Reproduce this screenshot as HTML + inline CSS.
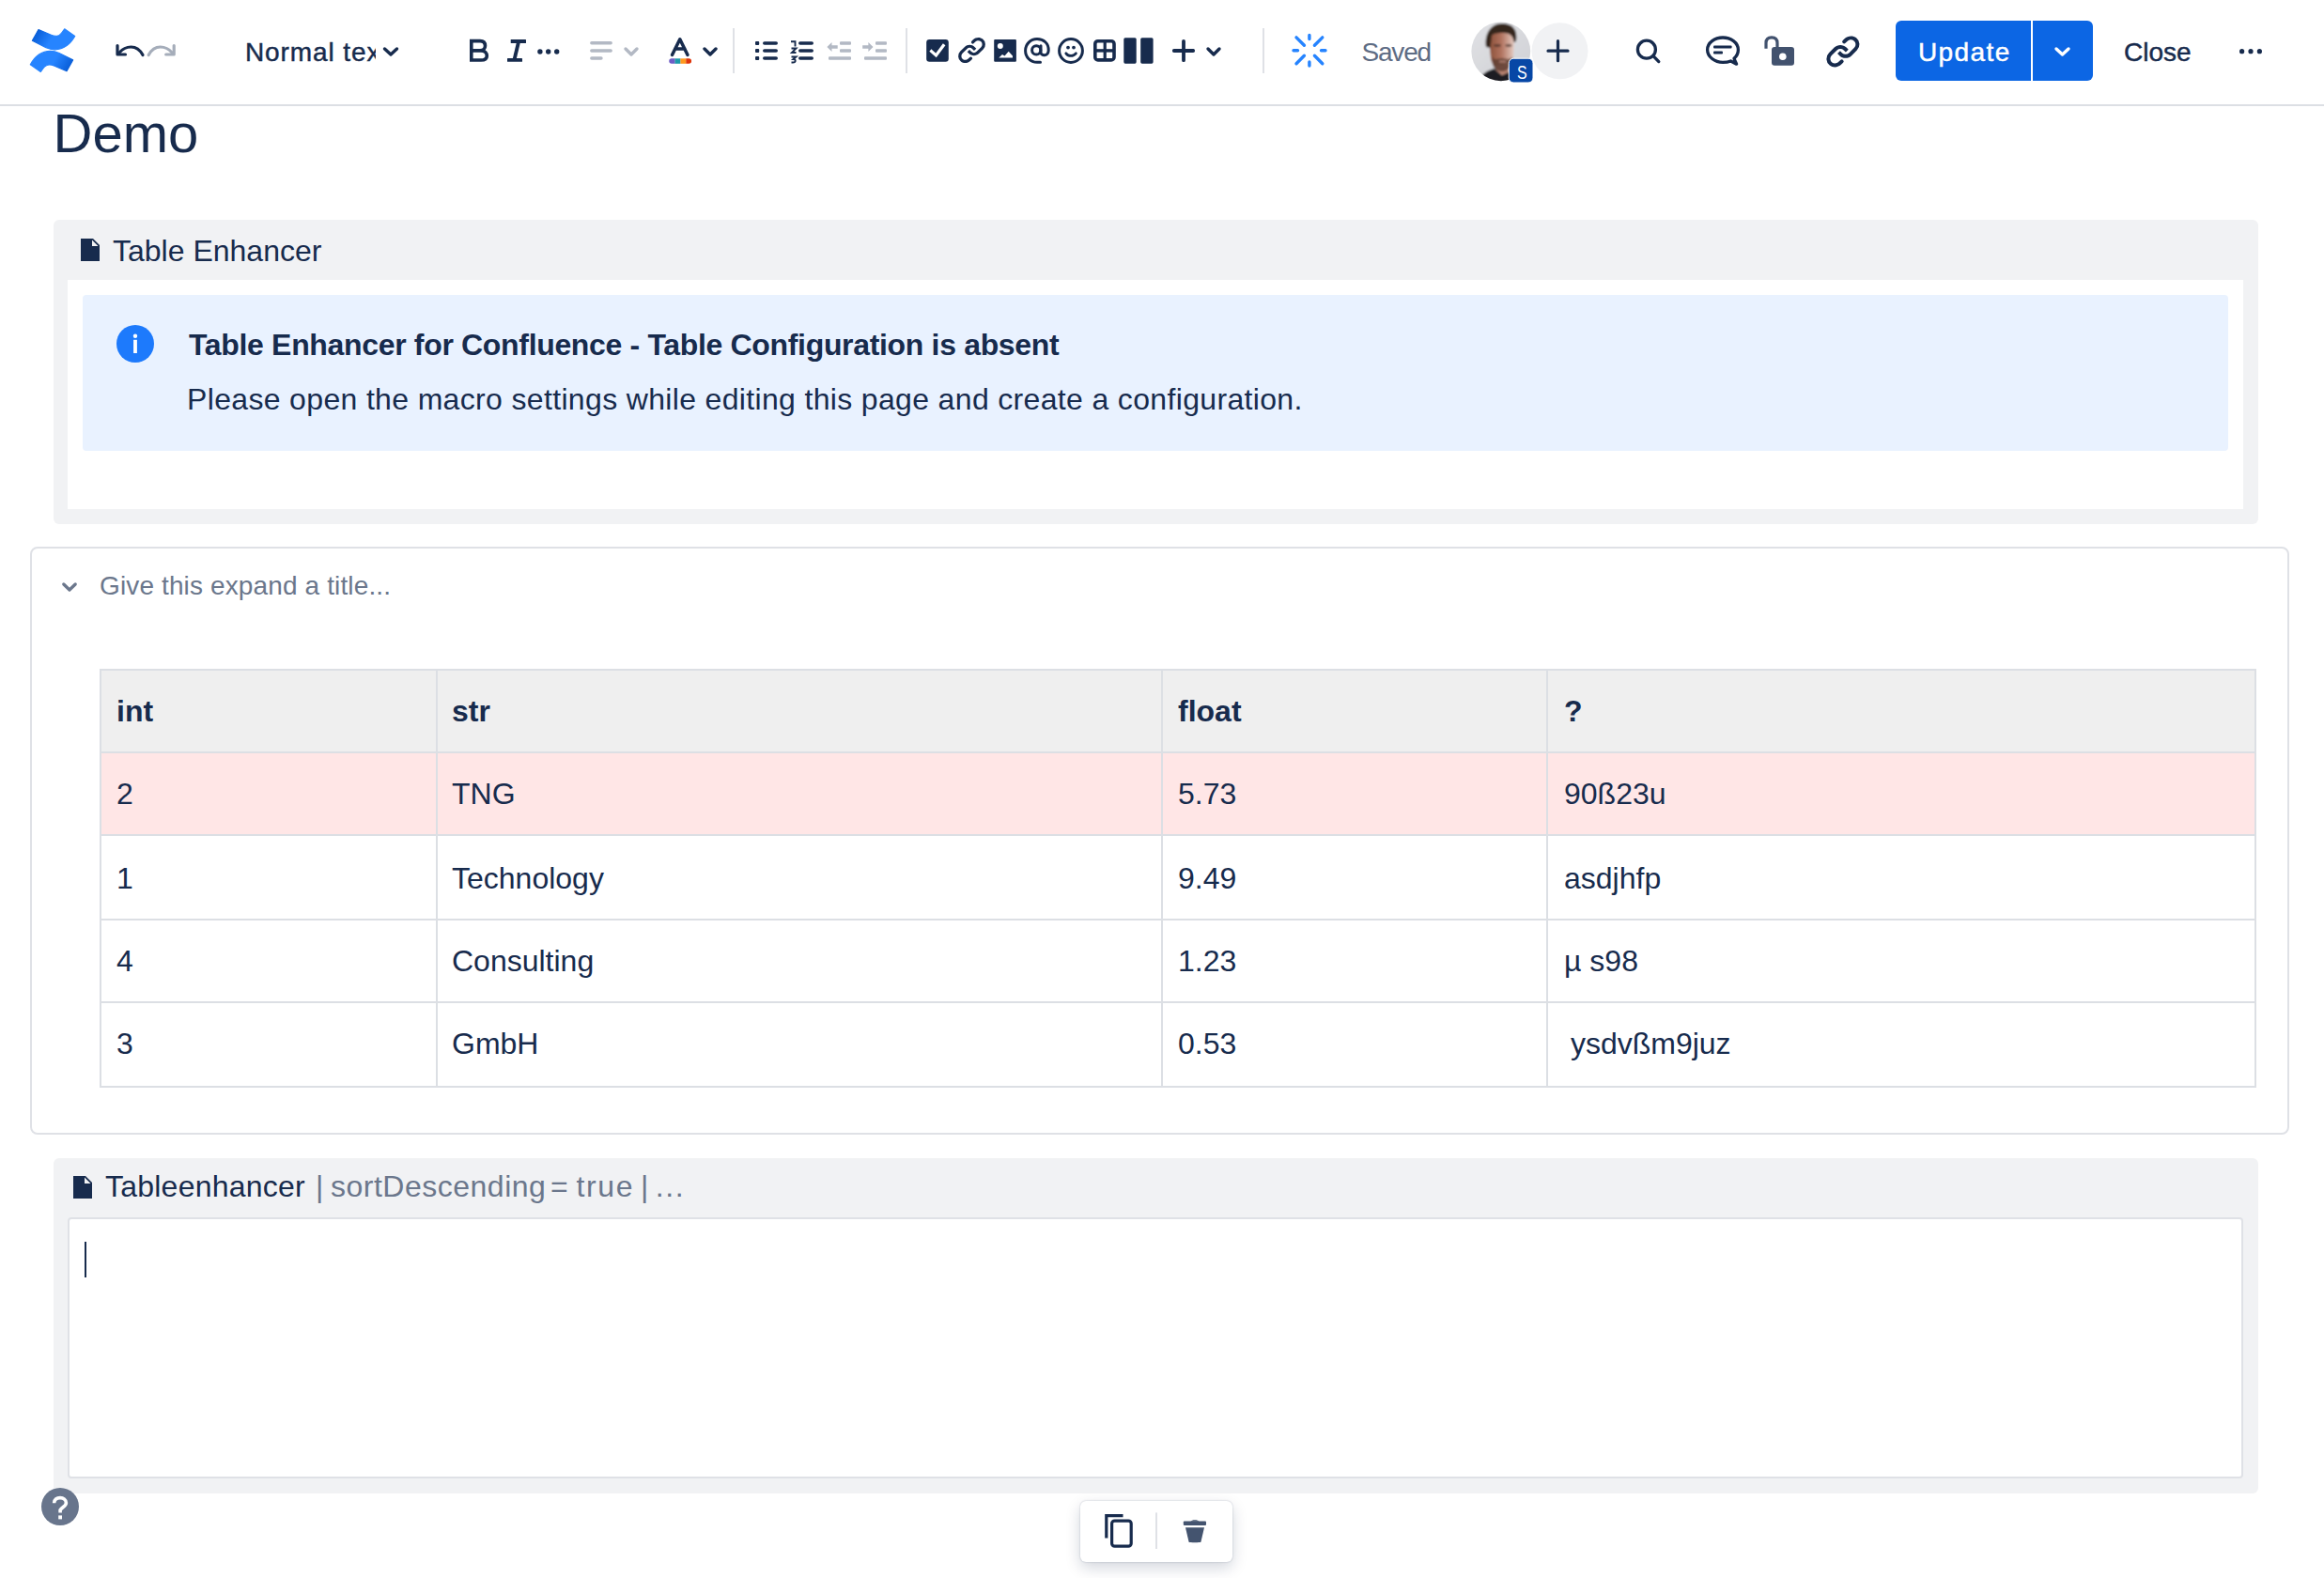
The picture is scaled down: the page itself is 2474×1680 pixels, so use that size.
<!DOCTYPE html>
<html><head><meta charset="utf-8">
<style>
html,body{margin:0;padding:0;background:#fff;}
body{width:2474px;height:1680px;position:relative;overflow:hidden;font-family:"Liberation Sans",sans-serif;color:#172B4D;}
.a{position:absolute;white-space:nowrap;line-height:1;}
.t28{font-size:28px;}
.t32{font-size:32px;}
.b{font-weight:bold;}
#hdr{position:absolute;left:0;top:0;width:2474px;height:111px;background:#fff;border-bottom:2px solid #DCDFE4;}
svg.ov{position:absolute;left:0;top:0;overflow:visible;}
.btn{position:absolute;background:#0C66E4;}
.panel{position:absolute;background:#F1F2F4;border-radius:6px;}
.cell{position:absolute;}
.hl{position:absolute;background:#DCDFE4;}
</style></head>
<body>
<div id="hdr"></div>

<!-- toolbar texts -->
<div class="a t28" style="left:261px;top:42px;width:139px;overflow:hidden;letter-spacing:0.9px;-webkit-text-stroke:0.45px #172B4D;">Normal text</div>
<div class="a t28" style="left:1449.5px;top:42px;color:#5E6C84;letter-spacing:-1.2px;">Saved</div>
<div class="btn" style="left:2018px;top:22px;width:144px;height:64px;border-radius:6px 0 0 6px;"></div>
<div class="btn" style="left:2164px;top:22px;width:64px;height:64px;border-radius:0 6px 6px 0;"></div>
<div class="a t28" style="left:2042px;top:42px;color:#fff;letter-spacing:1.4px;-webkit-text-stroke:0.45px #fff;">Update</div>
<div class="a t28" style="left:2261px;top:42px;-webkit-text-stroke:0.45px #172B4D;">Close</div>

<!-- title -->
<div class="a" style="left:56.5px;top:112.6px;font-size:58px;">Demo</div>

<!-- Table Enhancer panel -->
<div class="panel" style="left:57px;top:234px;width:2347px;height:324px;"></div>
<div class="a t32" style="left:120px;top:251px;">Table Enhancer</div>
<div style="position:absolute;left:72px;top:298px;width:2316px;height:244px;background:#fff;"></div>
<div style="position:absolute;left:88px;top:314px;width:2284px;height:166px;background:#E9F2FF;border-radius:4px;"></div>
<div class="a t32 b" style="left:201px;top:351px;letter-spacing:-0.33px;">Table Enhancer for Confluence - Table Configuration is absent</div>
<div class="a t32" style="left:199px;top:408.5px;letter-spacing:0.34px;">Please open the macro settings while editing this page and create a configuration.</div>

<!-- expand -->
<div style="position:absolute;left:32px;top:582px;width:2401px;height:622px;border:2px solid #DFE1E6;border-radius:8px;box-sizing:content-box;"></div>
<div class="a t28" style="left:106px;top:610px;color:#6B778C;letter-spacing:0.13px;">Give this expand a title...</div>

<!-- table -->
<div style="position:absolute;left:107px;top:713px;width:2294px;height:88px;background:#EFEFEF;"></div>
<div style="position:absolute;left:107px;top:801px;width:2294px;height:88px;background:#FFE6E6;"></div>
<!-- horizontal lines -->
<div class="hl" style="left:106px;top:712px;width:2296px;height:2px;"></div>
<div class="hl" style="left:106px;top:800px;width:2296px;height:2px;"></div>
<div class="hl" style="left:106px;top:888px;width:2296px;height:2px;"></div>
<div class="hl" style="left:106px;top:977.5px;width:2296px;height:2px;"></div>
<div class="hl" style="left:106px;top:1066px;width:2296px;height:2px;"></div>
<div class="hl" style="left:106px;top:1155.5px;width:2296px;height:2px;"></div>
<!-- vertical lines -->
<div class="hl" style="left:106px;top:712px;width:2px;height:445px;"></div>
<div class="hl" style="left:464px;top:712px;width:2px;height:445px;"></div>
<div class="hl" style="left:1236px;top:712px;width:2px;height:445px;"></div>
<div class="hl" style="left:1645.8px;top:712px;width:2px;height:445px;"></div>
<div class="hl" style="left:2400px;top:712px;width:2px;height:445px;"></div>

<div class="a t32 b" style="left:124px;top:741px;">int</div>
<div class="a t32 b" style="left:481px;top:741px;">str</div>
<div class="a t32 b" style="left:1254px;top:741px;">float</div>
<div class="a t32 b" style="left:1665px;top:741px;">?</div>

<div class="a t32" style="left:124px;top:829px;">2</div>
<div class="a t32" style="left:481px;top:829px;">TNG</div>
<div class="a t32" style="left:1254px;top:829px;">5.73</div>
<div class="a t32" style="left:1665px;top:829px;">90ß23u</div>

<div class="a t32" style="left:124px;top:919px;">1</div>
<div class="a t32" style="left:481px;top:919px;">Technology</div>
<div class="a t32" style="left:1254px;top:919px;">9.49</div>
<div class="a t32" style="left:1665px;top:919px;">asdjhfp</div>

<div class="a t32" style="left:124px;top:1007px;">4</div>
<div class="a t32" style="left:481px;top:1007px;">Consulting</div>
<div class="a t32" style="left:1254px;top:1007px;">1.23</div>
<div class="a t32" style="left:1665px;top:1007px;">µ s98</div>

<div class="a t32" style="left:124px;top:1095px;">3</div>
<div class="a t32" style="left:481px;top:1095px;">GmbH</div>
<div class="a t32" style="left:1254px;top:1095px;">0.53</div>
<div class="a t32" style="left:1663px;top:1095px;">&nbsp;ysdvßm9juz</div>

<!-- bottom macro panel -->
<div class="panel" style="left:57px;top:1233px;width:2347px;height:357px;border-radius:6px 6px 6px 0;"></div>
<div class="a t32" style="left:112px;top:1247px;letter-spacing:0.23px;">Tableenhancer</div>
<div class="a t32" style="left:336px;top:1247px;color:#6B778C;">|</div>
<div class="a t32" style="left:352px;top:1247px;color:#6B778C;letter-spacing:0.5px;">sortDescending</div>
<div class="a t32" style="left:586px;top:1247px;color:#6B778C;">=</div>
<div class="a t32" style="left:613.5px;top:1247px;color:#6B778C;letter-spacing:1.6px;">true</div>
<div class="a t32" style="left:682px;top:1247px;color:#6B778C;">|</div>
<div class="a t32" style="left:697.7px;top:1247px;color:#6B778C;letter-spacing:1.7px;">...</div>
<div style="position:absolute;left:72px;top:1296px;width:2312px;height:274px;background:#fff;border:2px solid #DFE1E6;border-radius:4px;"></div>
<div style="position:absolute;left:90px;top:1322px;width:2px;height:38px;background:#172B4D;"></div>

<!-- floating toolbar -->
<div style="position:absolute;left:1150px;top:1598px;width:162px;height:65px;background:#fff;border-radius:6px;box-shadow:0 6px 16px rgba(9,30,66,0.18),0 0 2px rgba(9,30,66,0.25);"></div>

<svg class="ov" width="2474" height="1680" viewBox="0 0 2474 1680">
<defs>
<linearGradient id="lg1" x1="0" y1="0" x2="1" y2="0.3"><stop offset="0" stop-color="#0052CC"/><stop offset="0.55" stop-color="#2684FF"/><stop offset="1" stop-color="#2684FF"/></linearGradient>
</defs>
<!-- Confluence logo -->
<g fill="url(#lg1)" stroke="url(#lg1)" stroke-width="1.2" stroke-linejoin="round">
<path d="M41 31.6 L54.5 37.2 C58 38.8 63 39 66 34.5 L68.7 30.8 L79.7 38.5 C75 47 68 52.5 58.5 52.8 C55 52.9 52 52 49 50.7 L34.4 43.3 Z"/>
<path transform="rotate(180 56 53.6)" d="M41 31.6 L54.5 37.2 C58 38.8 63 39 66 34.5 L68.7 30.8 L79.7 38.5 C75 47 68 52.5 58.5 52.8 C55 52.9 52 52 49 50.7 L34.4 43.3 Z"/>
</g>
<!-- undo -->
<g fill="none" stroke="#172B4D" stroke-width="3.2" stroke-linecap="round" stroke-linejoin="round">
<path d="M125 48.5 V58 H133.5"/>
<path d="M127 56 C131 51.5 135 50 139.5 50 C144.5 50 149 53 152 58.5"/>
</g>
<!-- redo -->
<g fill="none" stroke="#A5ADBA" stroke-width="3.2" stroke-linecap="round" stroke-linejoin="round">
<path d="M185.2 48.5 V58 H176.7"/>
<path d="M183.2 56 C179.2 51.5 175.2 50 170.7 50 C165.7 50 161.2 53 158.2 58.5"/>
</g>
<!-- chevrons -->
<g fill="none" stroke-width="3.4" stroke-linecap="round" stroke-linejoin="round">
<path stroke="#172B4D" d="M409.5 52 L416 58 L422.5 52"/>
<path stroke="#B3B9C4" d="M666 52 L672 58 L678 52"/>
<path stroke="#172B4D" d="M750 52 L756 58 L762 52"/>
<path stroke="#172B4D" d="M1286 52 L1292 58 L1298 52"/>
<path stroke="#fff" d="M2189 52 L2195.5 58 L2202 52"/>
</g>
<!-- B -->
<path fill="none" stroke="#172B4D" stroke-width="3.6" stroke-linejoin="miter" d="M501.8 43.6 H511 C515 43.6 516.5 46 516.5 48.8 C516.5 51.5 514.5 53.9 511 53.9 H501.8 Z M501.8 53.9 H512 C516.5 53.9 518.3 56.7 518.3 59.4 C518.3 62 516.5 64 512 64 H501.8 Z"/>
<!-- I -->
<g fill="#172B4D">
<rect x="543.7" y="42" width="16.3" height="4" rx="0.5"/>
<rect x="540" y="62" width="16" height="3.8" rx="0.5"/>
<path d="M549.7 46 H553.7 L549.9 62 H545.9 Z"/>
<circle cx="574.9" cy="55" r="2.7"/><circle cx="583.7" cy="55" r="2.7"/><circle cx="592.7" cy="55" r="2.7"/>
</g>
<!-- align -->
<g stroke="#B3B9C4" stroke-width="3.4" stroke-linecap="round">
<path d="M629.8 45.8 H650.2 M629.8 54 H650.2 M629.8 62 H640"/>
</g>
<!-- text color A -->
<path fill="none" stroke="#172B4D" stroke-width="3.5" stroke-linecap="round" stroke-linejoin="round" d="M715.5 58.5 L723.8 41.8 L732 58.5 M718.6 52 H729"/>
<g>
<path fill="#6E5DC6" d="M715 62.3 H718.6 V67.8 H715 A2.75 2.75 0 0 1 715 62.3 Z"/>
<rect x="718.5" y="62.3" width="6" height="5.5" fill="#1D9AAA"/>
<rect x="724.4" y="62.3" width="6" height="5.5" fill="#FF991F"/>
<path fill="#DE350B" d="M730.3 62.3 H733.3 A2.75 2.75 0 0 1 733.3 67.8 H730.3 Z"/>
</g>
<!-- separators -->
<g fill="#DFE1E6">
<rect x="780" y="30" width="2" height="48"/>
<rect x="964" y="30" width="2" height="48"/>
<rect x="1344" y="30" width="2" height="48"/>
</g>
<!-- bullet list -->
<g fill="#172B4D">
<rect x="804" y="44" width="4.2" height="4" rx="1"/><rect x="804" y="52" width="4.2" height="4" rx="1"/><rect x="804" y="60" width="4.2" height="4" rx="1"/>
<rect x="812" y="44.2" width="16" height="3.6" rx="1.8"/><rect x="812" y="52.2" width="16" height="3.6" rx="1.8"/><rect x="812" y="60.2" width="16" height="3.6" rx="1.8"/>
<rect x="850" y="44.2" width="16" height="3.6" rx="1.8"/><rect x="850" y="52.2" width="16" height="3.6" rx="1.8"/><rect x="850" y="60.2" width="16" height="3.6" rx="1.8"/>
</g>
<g fill="none" stroke="#172B4D" stroke-width="1.9" stroke-linejoin="miter">
<path d="M842 44.2 H846.5 V49.5"/>
<path d="M842.5 51.5 H847.5 L843 56 H847.5"/>
<path d="M842.5 60.5 H847.5 L844.5 63 C847.5 63 847.5 66.5 844 66.5 H842.5"/>
</g>
<!-- outdent / indent -->
<g fill="#B3B9C4">
<path d="M880.4 50 L885.5 45 V48.3 H891.7 V51.7 H885.5 V55 Z"/>
<rect x="894" y="44.2" width="12" height="3.6" rx="1"/><rect x="894" y="52.2" width="12" height="3.6" rx="1"/><rect x="882" y="60.2" width="24" height="3.6" rx="1"/>
<path d="M929.5 50 L924.4 45 V48.3 H918.2 V51.7 H924.4 V55 Z"/>
<rect x="932" y="44.2" width="12" height="3.6" rx="1"/><rect x="932" y="52.2" width="12" height="3.6" rx="1"/><rect x="920" y="60.2" width="24" height="3.6" rx="1"/>
</g>
<!-- checkbox -->
<rect x="986.2" y="42.1" width="23.6" height="23.7" rx="3.2" fill="#172B4D"/>
<path fill="none" stroke="#fff" stroke-width="3.2" stroke-linecap="square" d="M991.6 54.6 L996.5 59 L1004.2 48.6"/>
<!-- link -->
<g fill="#172B4D" transform="translate(1015.3 33.6) scale(1.6)"><path d="M12.856 5.457l-.937.92a1.002 1.002 0 000 1.437 1.047 1.047 0 001.463 0l.984-.966c.967-.95 2.542-1.135 3.602-.288a2.54 2.54 0 01.203 3.81l-2.903 2.852a2.646 2.646 0 01-3.696 0l-1.11-1.09L9 13.57l1.108 1.089c1.822 1.788 4.802 1.788 6.622 0l2.905-2.852a4.558 4.558 0 00-.357-6.82c-1.893-1.517-4.695-1.226-6.422.47"/><path d="M11.144 19.458l.937-.92a1.002 1.002 0 000-1.437 1.047 1.047 0 00-1.462 0l-.985.966c-.967.95-2.542 1.135-3.602.288a2.54 2.54 0 01-.203-3.81l2.903-2.852a2.646 2.646 0 013.696 0l1.11 1.09L15 11.345l-1.108-1.088c-1.822-1.789-4.802-1.789-6.622 0l-2.905 2.852a4.558 4.558 0 00.357 6.82c1.893 1.517 4.695 1.226 6.422-.47"/></g>
<!-- image -->
<rect x="1058.2" y="42.1" width="23.7" height="23.7" rx="1" fill="#172B4D"/>
<circle cx="1064.8" cy="49.1" r="3" fill="#fff"/>
<path fill="#fff" d="M1063.3 61.5 L1067 58 L1069.5 59.5 L1073.7 54.8 L1078 59.5 V61.5 Z"/>
<!-- @ -->
<g fill="none" stroke="#172B4D" stroke-width="3" stroke-linecap="round">
<circle cx="1103.2" cy="53.4" r="4.6"/>
<path d="M1108 48.8 V56 C1108 59.5 1116 60.5 1116.2 53.5 C1116.4 46 1111 41.6 1104 41.6 C1097 41.6 1091.6 47 1091.6 54 C1091.6 61 1097 66.3 1104 66.3 H1107.5"/>
</g>
<!-- emoji -->
<circle cx="1140" cy="54" r="12.4" fill="none" stroke="#172B4D" stroke-width="3"/>
<g fill="#172B4D"><circle cx="1137" cy="50.6" r="1.9"/><circle cx="1143" cy="50.6" r="1.9"/></g>
<path fill="none" stroke="#172B4D" stroke-width="2.8" stroke-linecap="round" d="M1134.8 56.8 C1137.5 60.3 1142.5 60.3 1145.4 56.8"/>
<!-- table -->
<rect x="1165.8" y="43.7" width="20.2" height="20.2" rx="3" fill="none" stroke="#172B4D" stroke-width="3.6"/>
<rect x="1174.6" y="43" width="3.2" height="22" fill="#172B4D"/>
<rect x="1165" y="52.2" width="22" height="3.4" fill="#172B4D"/>
<!-- layout -->
<rect x="1196.3" y="40.2" width="13.4" height="27.5" rx="1.6" fill="#172B4D"/>
<rect x="1214.2" y="40.2" width="13.4" height="27.5" rx="1.6" fill="#172B4D"/>
<!-- plus -->
<path stroke="#172B4D" stroke-width="3.8" stroke-linecap="round" d="M1249.8 54 H1270.2 M1260 43.8 V64.2"/>
<!-- spinner -->
<g stroke="#2684FF" stroke-width="3.4" stroke-linecap="round">
<path d="M1393.9 37.5 V41.5 M1393.9 66 V70 M1377 53.8 H1381.5 M1406.5 53.8 H1411"/>
<path d="M1380 39.9 L1388.4 48.3 M1399.4 59.3 L1407.8 67.7 M1407.8 39.9 L1399.4 48.3 M1388.4 59.3 L1380 67.7"/>
</g>
<!-- avatar -->
<clipPath id="avc"><circle cx="1597.8" cy="54.8" r="31.4"/></clipPath>
<linearGradient id="skin" x1="0" y1="0" x2="1" y2="0"><stop offset="0" stop-color="#8A5038"/><stop offset="0.5" stop-color="#B27460"/><stop offset="1" stop-color="#E6CDC4"/></linearGradient>
<linearGradient id="avbg" x1="0" y1="0" x2="1" y2="1"><stop offset="0" stop-color="#E2E3E6"/><stop offset="1" stop-color="#CDCED3"/></linearGradient>
<filter id="bl" x="-20%" y="-20%" width="140%" height="140%"><feGaussianBlur stdDeviation="0.9"/></filter>
<g clip-path="url(#avc)"><g filter="url(#bl)">
<rect x="1560" y="20" width="80" height="70" fill="url(#avbg)"/>
<path fill="url(#skin)" d="M1585 42 C1585 35 1591 32 1599 32 C1607 32 1612 36 1612 44 L1611 60 C1610 69 1605 74 1599 74 C1592 74 1588 69 1587 62 Z"/>
<path fill="#1E1E22" d="M1570 92 L1576 82 C1580 77 1586 74 1591 73 L1599 80 L1607 76 L1616 92 Z"/>
<path fill="#B98270" d="M1592 70 L1606 70 L1606 77 L1599 80 L1592 74 Z"/>
<path fill="#35261F" d="M1582 50 C1580 36 1587 25 1599 25 C1610 25 1616 31 1614 44 L1611.5 45 C1611 38 1607 35 1601 35 C1596 35 1590 35 1588 38 L1586.5 51 Z"/>
<ellipse cx="1594" cy="48.5" rx="4" ry="1.4" fill="#4A3028" opacity="0.75"/>
<ellipse cx="1606" cy="48.5" rx="3.6" ry="1.4" fill="#4A3028" opacity="0.75"/>
<path fill="#5A3C30" opacity="0.8" d="M1588 60 C1590 64 1593 63 1599 62 C1605 63 1608 64 1610 60 L1609 68 C1607 74 1603 76 1599 76 C1595 76 1590 74 1589 68 Z"/>
<path fill="#C79484" opacity="0.7" d="M1596 64.5 H1603 V66.5 H1596 Z"/>
</g></g>
<rect x="1606.2" y="62.2" width="25.8" height="25.8" rx="5" fill="#0747A6" stroke="#fff" stroke-width="1"/>
<text x="0" y="0" font-family="Liberation Sans" font-size="19.5" fill="#fff" text-anchor="middle" transform="translate(1620.3 83.6) scale(0.82 1)">S</text>
<!-- add collaborator -->
<circle cx="1660.5" cy="54.3" r="30" fill="#F1F2F4"/>
<path stroke="#172B4D" stroke-width="3.2" stroke-linecap="round" d="M1647.8 54.2 H1668.8 M1658.3 43.7 V64.7" transform="translate(0.2 0)"/>
<!-- search -->
<circle cx="1752.9" cy="52.7" r="9.5" fill="none" stroke="#172B4D" stroke-width="3.3"/>
<path stroke="#172B4D" stroke-width="3.3" stroke-linecap="round" d="M1760 59.6 L1765.8 65.6"/>
<!-- comment -->
<g fill="none" stroke="#172B4D" stroke-width="3.3">
<path d="M1842.5 65 C1840 66 1837 66.4 1834 66.4 C1825.5 66.4 1817.6 60.6 1817.6 53 C1817.6 45.4 1825.5 40 1834 40 C1842.5 40 1850.4 45.4 1850.4 53 C1850.4 57 1848.6 60 1846 62.3 L1848.6 68.2 Z" stroke-linejoin="round"/>
</g>
<g fill="#172B4D"><rect x="1824" y="48.6" width="19.6" height="3" rx="1"/><rect x="1824" y="54.5" width="10" height="3" rx="1"/></g>
<!-- unlock -->
<path fill="none" stroke="#42526E" stroke-width="3.2" d="M1880 51.8 V45.8 C1880 41.5 1882.5 39.8 1886 39.8 C1889.5 39.8 1892 41.5 1892 45.8 V51.5"/>
<rect x="1886" y="50.1" width="24" height="19.6" rx="3" fill="#42526E"/>
<circle cx="1897.8" cy="60.2" r="3.8" fill="#fff"/>
<!-- link 2 -->
<g fill="#172B4D" transform="translate(1938.5 30.6) scale(1.95)"><path d="M12.856 5.457l-.937.92a1.002 1.002 0 000 1.437 1.047 1.047 0 001.463 0l.984-.966c.967-.95 2.542-1.135 3.602-.288a2.54 2.54 0 01.203 3.81l-2.903 2.852a2.646 2.646 0 01-3.696 0l-1.11-1.09L9 13.57l1.108 1.089c1.822 1.788 4.802 1.788 6.622 0l2.905-2.852a4.558 4.558 0 00-.357-6.82c-1.893-1.517-4.695-1.226-6.422.47"/><path d="M11.144 19.458l.937-.92a1.002 1.002 0 000-1.437 1.047 1.047 0 00-1.462 0l-.985.966c-.967.95-2.542 1.135-3.602.288a2.54 2.54 0 01-.203-3.81l2.903-2.852a2.646 2.646 0 013.696 0l1.11 1.09L15 11.345l-1.108-1.088c-1.822-1.789-4.802-1.789-6.622 0l-2.905 2.852a4.558 4.558 0 00.357 6.82c1.893 1.517 4.695 1.226 6.422-.47"/></g>
<!-- more -->
<g fill="#172B4D"><circle cx="2386.6" cy="54.7" r="2.6"/><circle cx="2396" cy="54.7" r="2.6"/><circle cx="2405.4" cy="54.7" r="2.6"/></g>

<!-- panel doc icons -->
<path fill="#172B4D" d="M86 254 H99 L106 261 V278 H86 Z"/>
<path fill="#F1F2F4" d="M98 255.5 L98 262 L104.5 262 Z"/>
<path fill="#172B4D" d="M78 1252 H91 L98 1259 V1276 H78 Z"/>
<path fill="#F1F2F4" d="M90 1253.5 L90 1260 L96.5 1260 Z"/>
<!-- info icon -->
<circle cx="144" cy="366" r="20" fill="#1D7AFC"/>
<circle cx="144" cy="357.8" r="2.2" fill="#fff"/>
<rect x="142.1" y="361.8" width="3.8" height="14.2" fill="#fff"/>
<!-- expand chevron -->
<path fill="none" stroke="#6B778C" stroke-width="3.3" stroke-linecap="round" stroke-linejoin="round" d="M67.8 622 L74 628 L80.2 622"/>
<!-- help -->
<circle cx="64" cy="1604" r="20" fill="#68758C"/>
<path fill="none" stroke="#fff" stroke-width="3.6" d="M57.6 1600.3 C57.6 1596.3 60.5 1594.6 64 1594.6 C67.5 1594.6 70.4 1596.7 70.4 1600 C70.4 1603.6 66 1604.4 64.1 1607.6 V1610.5"/>
<rect x="62.2" y="1613.4" width="3.8" height="4" fill="#fff"/>
<!-- floating toolbar icons -->
<path fill="none" stroke="#172B4D" stroke-width="3.2" d="M1177.8 1637.5 V1613.6 H1195.5"/>
<rect x="1183.6" y="1619.1" width="20.6" height="27.1" rx="3" fill="none" stroke="#172B4D" stroke-width="3.2"/>
<rect x="1230" y="1610.4" width="2" height="38.6" fill="#DFE1E6"/>
<g fill="#44546F">
<rect x="1259.8" y="1619.6" width="24.2" height="4.3" rx="1"/>
<path d="M1267.5 1619.8 C1268 1617.6 1276 1617.6 1276.5 1619.8 Z"/>
<path d="M1262 1626.3 H1282 L1278.4 1641.8 C1278 1642.4 1266 1642.4 1265.6 1641.8 Z"/>
</g>
</svg>
</body></html>
